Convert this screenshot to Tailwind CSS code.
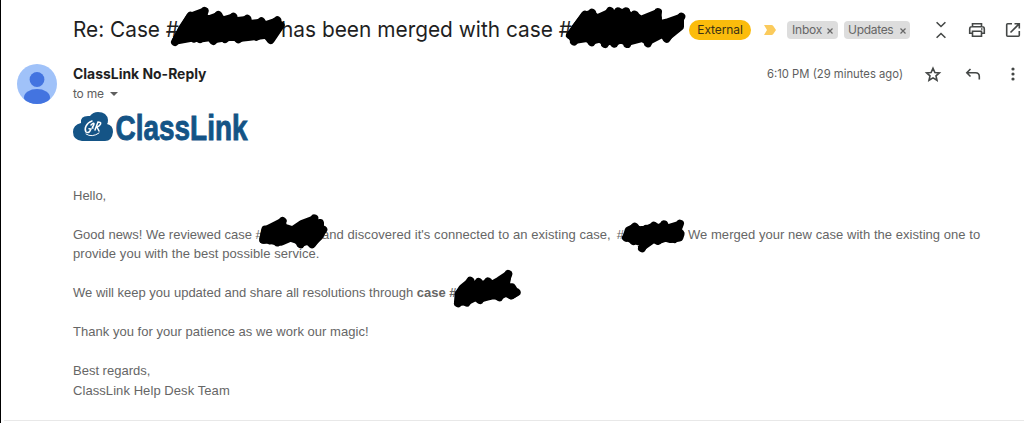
<!DOCTYPE html>
<html lang="en">
<head>
    <meta charset="UTF-8">
    <meta name="viewport" content="width=device-width, initial-scale=1.0">
    <title>Re: Case has been merged</title>
    <script src="https://cdn.jsdelivr.net/npm/@tailwindcss/browser@4"></script>
</head>
<body class="bg-white">
<div class="relative w-[1032px] h-[423px] overflow-hidden border-l border-black font-['Inter',sans-serif]">
    <!-- subject row -->
    <div class="flex items-center h-[60px] pl-[72px] whitespace-nowrap">
        <h1 class="flex w-[616px] shrink-0 text-[22px] leading-7 text-[#1f1f1f]">
            <svg class="w-full h-7 overflow-visible" fill="currentColor">
                <text x="0" y="21" textLength="106" lengthAdjust="spacingAndGlyphs">Re: Case #</text>
                <text x="208" y="21" textLength="291" lengthAdjust="spacingAndGlyphs">has been merged with case #</text>
            </svg>
        </h1>
        <span class="w-[62px] h-5 rounded-full bg-[#fbbc0c] text-center text-xs leading-5 tracking-[-0.1px] text-[#3c3215]">External</span>
        <svg class="ml-[13px] w-3 h-[10px]" viewBox="0 0 12 10" fill="#fbcb5c"><path d="M0 0h7.500q1 0 1.600.8L12 5 9.100 9.200q-.6.8-1.600.8H0l3-5z"/></svg>
        <span class="ml-[11px] w-[51px] h-[18px] rounded bg-[#dddddd] flex items-center justify-between px-[5px] text-xs tracking-[-0.2px] text-[#666]">Inbox
            <svg class="w-[6px] h-[6px] mt-0.5" viewBox="0 0 6 6" stroke="#666" stroke-width="1.200"><path d="M.5.5l5 5M5.500.5l-5 5"/></svg>
        </span>
        <span class="ml-[6px] w-[66px] h-[18px] rounded bg-[#dddddd] flex items-center justify-between px-[4px] text-xs tracking-[-0.3px] text-[#666]">Updates
            <svg class="w-[6px] h-[6px] mt-0.5" viewBox="0 0 6 6" stroke="#666" stroke-width="1.200"><path d="M.5.5l5 5M5.500.5l-5 5"/></svg>
        </span>
        <div class="ml-[21px] flex gap-4 shrink-0 text-[#444746]">
            <svg class="w-5 h-5" viewBox="0 0 20 20" fill="none" stroke="currentColor" stroke-width="1.600"><path d="M5.600 2.200l4.400 4.300 4.400-4.300M5.600 17.800l4.400-4.300 4.400 4.300"/></svg>
            <svg class="w-5 h-5" viewBox="0 0 20 20" fill="none" stroke="currentColor" stroke-width="1.600"><path d="M5.500 6.500V3.700h9v2.800M5.500 13.300H2.700V9q0-2.200 2-2.200h10.600q2 0 2 2.200v4.300h-2.800M5.500 11.200h9v5h-9z"/><path d="M14 9h1.500"/></svg>
            <svg class="w-5 h-5" viewBox="0 0 20 20" fill="none" stroke="currentColor" stroke-width="1.600"><path d="M9 3.700H4.700q-1 0-1 1v10.600q0 1 1 1h10.600q1 0 1-1V11M11.500 3.700h4.800v4.800M16 4l-8.500 8.500"/></svg>
        </div>
    </div>

    <!-- sender row -->
    <div class="flex pl-4 pt-1">
        <svg class="w-10 h-10 shrink-0" viewBox="0 0 40 40">
            <clipPath id="avatar"><circle cx="20" cy="20" r="20"/></clipPath>
            <g clip-path="url(#avatar)">
                <rect width="40" height="40" fill="#a0c2f9"/>
                <circle cx="20" cy="15.500" r="7.400" fill="#4374e0"/>
                <ellipse cx="20" cy="33.500" rx="13" ry="8.500" fill="#4374e0"/>
            </g>
        </svg>
        <div class="ml-4 w-[694px] text-[#1f1f1f]">
            <svg class="w-[200px] h-5 text-sm font-bold overflow-visible" fill="currentColor"><text x="0" y="15" textLength="133.500" lengthAdjust="spacingAndGlyphs">ClassLink No-Reply</text></svg>
            <div class="flex items-center h-5 text-xs text-[#5e5e5e]">
                <span class="w-9 tracking-[-0.2px]">to me</span>
                <svg class="ml-[1px] w-2 h-1" viewBox="0 0 8 4" fill="#5e5e5e"><path d="M0 0h8L4 4z"/></svg>
            </div>
        </div>
        <svg class="w-[136px] h-5 text-xs shrink-0 overflow-visible" fill="#5e5e5e"><text x="0" y="14" textLength="136" lengthAdjust="spacingAndGlyphs">6:10 PM (29 minutes ago)</text></svg>
        <div class="ml-5 flex gap-5 shrink-0 text-[#444746]">
            <svg class="w-5 h-5" viewBox="0 0 20 20" fill="none" stroke="currentColor" stroke-width="1.600"><path d="M10 4.300l1.900 4.200 4.500.4-3.400 3 1 4.400-4-2.400-4 2.400 1-4.400-3.400-3 4.500-.4z"/></svg>
            <svg class="w-5 h-5" viewBox="0 0 20 20" fill="none" stroke="currentColor" stroke-width="1.600"><path d="M7.500 5L3.800 8.800l3.700 3.700M4 8.800h8.500q3.800 0 3.800 3.800v2.900"/></svg>
            <svg class="w-5 h-5" viewBox="0 0 20 20" fill="currentColor"><circle cx="10" cy="5" r="1.600"/><circle cx="10" cy="10" r="1.600"/><circle cx="10" cy="15" r="1.600"/></svg>
        </div>
    </div>

    <!-- message -->
    <div class="pl-[72px] pt-[7px] font-['Liberation_Sans',Arial,sans-serif] text-[13px] leading-[19.5px] text-[#666]">
        <svg class="w-[176px] h-8 overflow-visible" viewBox="0 0 176 32">
            <path d="M9 30q-9-1-9-9 0-7 8-9-1-7 7-7h2q3-4 8-4 9 0 10 8 0 3-1 4 6 1 6 8-1 9-8 9z" fill="#145486"/>
            <g fill="none" stroke="#fff" stroke-width="1.500" stroke-linecap="round">
                <path d="M19 10c-6 2-8 8-6 11q3 2 5-3l-2-.3M18 14q3-3 3-1c0 2-3 4-1 4M22 19l3-8q5 0 1 4l-2 1 2 4"/>
                <path d="M13 23q6 4 13-1" stroke-width="1"/>
            </g>
            <text x="42.500" y="29.200" textLength="132" lengthAdjust="spacingAndGlyphs" font-size="34.500" font-weight="bold" fill="#145486" stroke="#145486" stroke-width=".9">ClassLink</text>
        </svg>
        <p class="mt-[42.5px]">Hello,</p>
        <p class="mt-[19.5px] flex whitespace-nowrap">
            <span class="w-[249px]">Good news! We reviewed case #</span>
            <span class="w-[366px] tracking-[0.06px]">and discovered it's connected to an existing case,<span class="ml-[6px]">#</span></span>
            <span class="tracking-[0.04px]">We merged your new case with the existing one to</span>
        </p>
        <p class="tracking-[0.07px]">provide you with the best possible service.</p>
        <p class="mt-[19.5px]">We will keep you updated and share all resolutions through <b>case #</b></p>
        <p class="mt-[19.5px] tracking-[0.03px]">Thank you for your patience as we work our magic!</p>
        <p class="mt-[19.5px]">Best regards,</p>
        <p class="tracking-[0.07px]">ClassLink Help Desk Team</p>
    </div>
    <div class="absolute left-[3px] w-[1020px] top-[420px] h-px bg-[#e8e8e8]"></div>

    <!-- redacted case numbers: filled body with zigzag strokes over it -->
    <svg class="absolute -left-px top-0 w-[1032px] h-[423px] pointer-events-none" stroke="#000" stroke-width="24" stroke-linejoin="round" stroke-linecap="round">
        <g transform="translate(150 0) scale(.3333)">
            <path d="M78 122L96 86 119 52 134 46 160 36 162 54 178 58 205 48 218 62 244 54 256 64 290 60 300 72 334 68 346 76 380 65 388 78 360 116 348 104 318 108 300 110 266 114 250 110 228 112 190 118 178 112 150 116 132 112z"/>
            <path fill="none" d="M75 126L122 47M132 116L164 33M150 117L205 45M190 123L250 50M225 117L292 56M265 118L334 64M320 110L382 61M362 120L392 76"/>
        </g>
        <g transform="translate(550 0) scale(.3333)">
            <path d="M64 106L76 84 105 46 126 42 140 56 180 38 190 46 204 38 228 38 240 50 256 48 272 60 322 40 324 54 322 74 350 68 390 54 390 80 350 112 336 102 294 124 278 114 232 126 212 118 193 126 182 122 165 126 150 116 125 122 110 114 72 120z"/>
            <path fill="none" d="M60 106L105 44M72 125L126 38M125 127L180 33M165 132L204 34M193 131L228 34M232 132L254 44M294 130L324 36M350 116L394 50"/>
        </g>
        <g transform="translate(240 205) scale(.3333)">
            <path d="M70 104L76 76 96 66 124 52 132 68 158 76 188 56 220 44 228 56 240 54 240 68 248 74 238 94 216 114 202 108 182 114 170 104 152 98 124 110 106 108 88 104z"/>
            <path fill="none" d="M70 104L76 74M90 106L128 48M112 112L150 80M182 118L223 40M216 118L250 74"/>
        </g>
        <g transform="translate(600 205) scale(.3333)">
            <path d="M80 96L86 76 104 68 116 76 138 74 162 64 174 70 192 62 204 70 236 60 232 76 242 86 238 98 212 102 196 98 174 106 160 102 126 126 124 112 100 104z"/>
            <path fill="none" d="M78 98L104 65M100 108L138 72M126 130L162 62M174 108L192 58M222 102L240 56"/>
        </g>
        <g transform="translate(430 260) scale(.3333)">
            <path d="M84 126L86 102 98 84 120 66 132 78 146 70 158 76 174 68 186 74 208 62 232 46 230 60 226 80 246 82 256 98 244 106 228 98 208 108 188 106 172 110 150 116 134 112 110 124z"/>
            <path fill="none" d="M84 130L121 62M110 128L146 66M150 120L174 64M208 112L235 42M244 106L260 97"/>
        </g>
    </svg>
</div>
</body>
</html>
